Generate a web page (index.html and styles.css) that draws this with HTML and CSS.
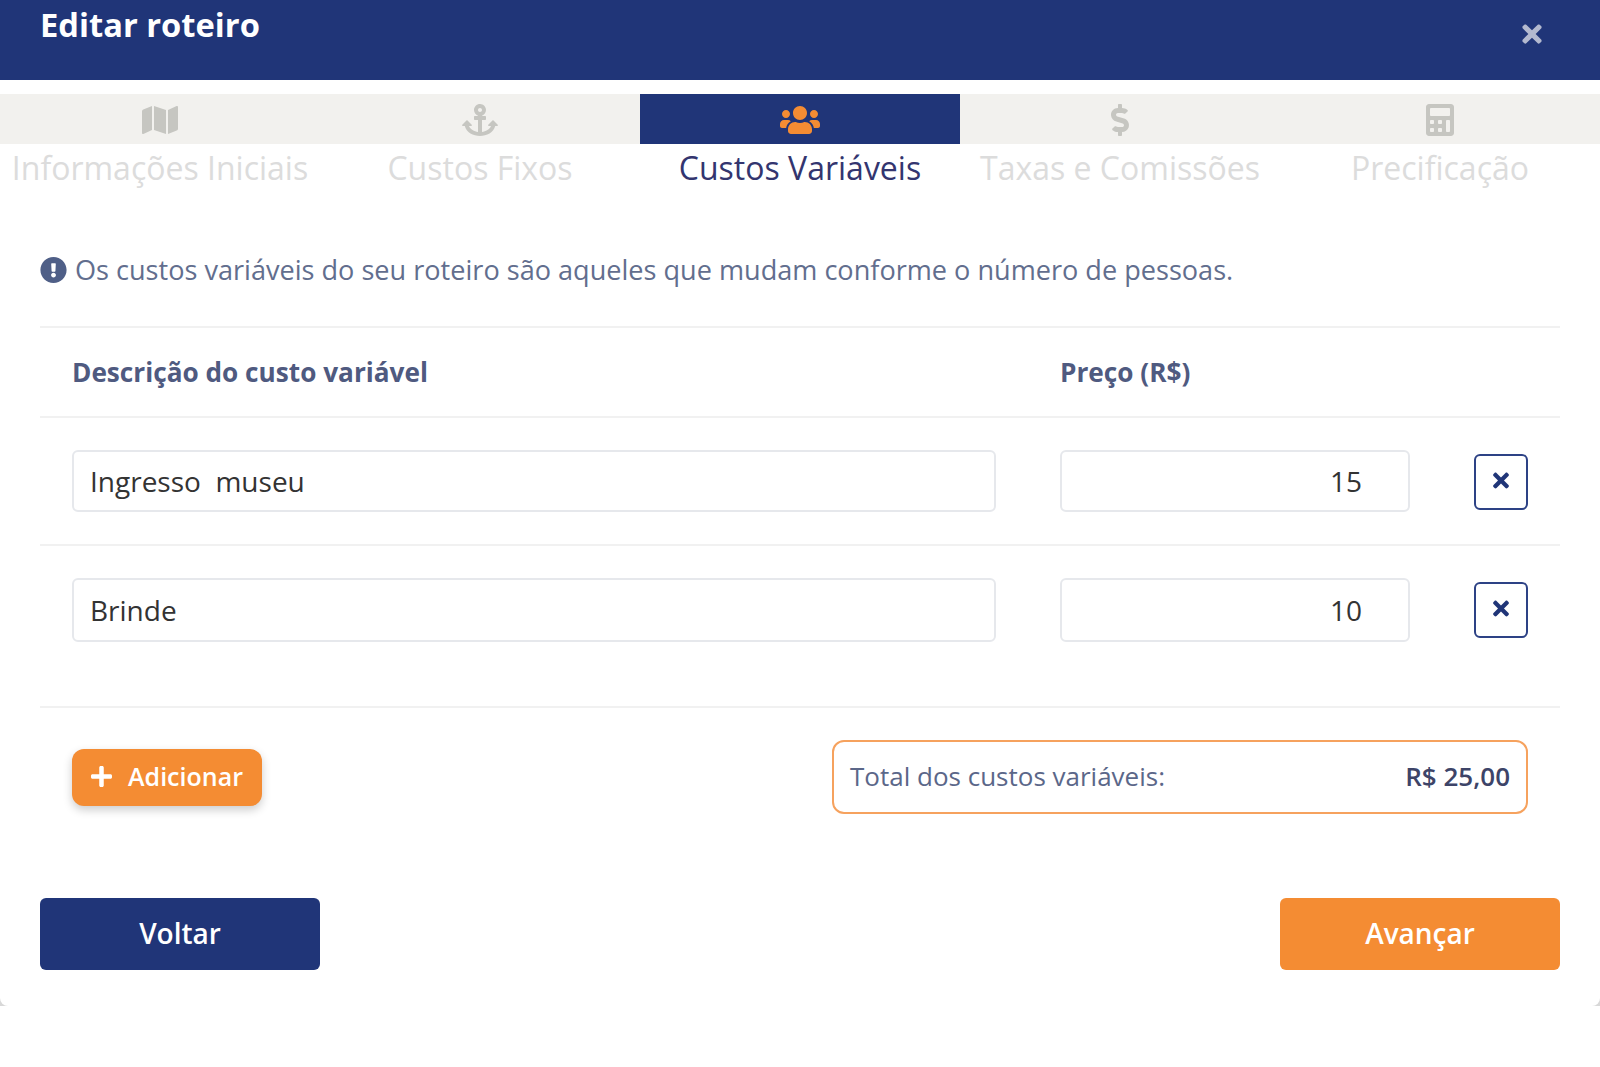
FILE: index.html
```html
<!DOCTYPE html>
<html lang="pt-BR">

<head>
  <meta charset="UTF-8">
  <title>Editar roteiro</title>
  <link rel="stylesheet" href="styles.css">
</head>

<body>
  <div class="page">
  <div class="modal">
    <header class="modal-head">
      <h2>Editar roteiro</h2>
      <svg class="close" viewBox="0 0 352 512"><path d="M242.72 256l100.07-100.07c12.28-12.28 12.28-32.19 0-44.48l-22.24-22.24c-12.28-12.28-32.19-12.28-44.48 0L176 189.28 75.93 89.21c-12.28-12.28-32.19-12.28-44.48 0L9.21 111.45c-12.28 12.28-12.28 32.19 0 44.48L109.28 256 9.21 356.07c-12.28 12.28-12.28 32.19 0 44.48l22.24 22.24c12.28 12.28 32.2 12.28 44.48 0L176 322.72l100.07 100.07c12.28 12.28 32.2 12.28 44.48 0l22.24-22.24c12.28-12.28 12.28-32.19 0-44.48L242.72 256z"/></svg>
    </header>

    <nav class="tabs">
      <div class="tab">
        <div class="tab-icon"><svg viewBox="0 0 576 512"><path d="M0 117.66v346.32c0 11.32 11.43 19.06 21.94 14.86L160 416V32L20.12 87.95A32.006 32.006 0 0 0 0 117.66zM192 416l192 64V96L192 32v384zM554.06 33.16L416 96v384l139.88-55.95A31.996 31.996 0 0 0 576 394.34V48.02c0-11.32-11.43-19.06-21.94-14.86z"/></svg></div>
        <span>Informações Iniciais</span>
      </div>
      <div class="tab">
        <div class="tab-icon"><svg viewBox="0 0 576 512"><path d="M12.971 352h32.394C67.172 454.735 181.944 512 288 512c106.229 0 220.853-57.38 242.635-160h32.394c10.691 0 16.045-12.926 8.485-20.485l-67.029-67.029c-4.686-4.686-12.284-4.686-16.971 0l-67.029 67.029c-7.56 7.56-2.206 20.485 8.485 20.485h35.146c-20.29 54.317-84.963 86.588-144.117 94.015V256h52c6.627 0 12-5.373 12-12v-40c0-6.627-5.373-12-12-12h-52v-5.47c37.281-13.178 63.995-48.725 64-90.518C384.005 43.772 341.605.738 289.37.01 235.723-.739 192 42.525 192 96c0 41.798 26.716 77.35 64 90.53V192h-52c-6.627 0-12 5.373-12 12v40c0 6.627 5.373 12 12 12h52v190.015c-58.936-7.399-123.82-39.679-144.117-94.015h35.146c10.691 0 16.045-12.926 8.485-20.485l-67.029-67.029c-4.686-4.686-12.284-4.686-16.971 0L4.485 331.515C-3.074 339.074 2.28 352 12.971 352zM288 64c17.645 0 32 14.355 32 32s-14.355 32-32 32-32-14.355-32-32 14.355-32 32-32z"/></svg></div>
        <span>Custos Fixos</span>
      </div>
      <div class="tab active">
        <div class="tab-icon"><svg viewBox="0 0 640 512"><path d="M96 224c35.3 0 64-28.7 64-64s-28.7-64-64-64-64 28.7-64 64 28.7 64 64 64zm448 0c35.3 0 64-28.7 64-64s-28.7-64-64-64-64 28.7-64 64 28.7 64 64 64zm32 32h-64c-17.6 0-33.5 7.1-45.1 18.6 40.3 22.1 68.9 62 75.1 109.4h66c17.7 0 32-14.3 32-32v-32c0-35.3-28.7-64-64-64zm-256 0c61.9 0 112-50.1 112-112S381.9 32 320 32 208 82.1 208 144s50.1 112 112 112zm76.8 32h-8.3c-20.8 10-43.9 16-68.5 16s-47.6-6-68.5-16h-8.3C179.6 288 128 339.6 128 403.2V432c0 26.5 21.5 48 48 48h288c26.5 0 48-21.5 48-48v-28.8c0-63.6-51.6-115.2-115.2-115.2zm-223.7-13.4C161.5 263.1 145.6 256 128 256H64c-35.3 0-64 28.7-64 64v32c0 17.7 14.3 32 32 32h65.9c6.3-47.4 34.9-87.3 75.2-109.4z"/></svg></div>
        <span>Custos Variáveis</span>
      </div>
      <div class="tab">
        <div class="tab-icon"><svg viewBox="0 0 288 512"><path d="M209.2 233.4l-108-31.6C88.7 198.2 80 186.5 80 173.5c0-16.3 13.2-29.5 29.5-29.5h66.3c12.2 0 24.2 3.7 34.2 10.5 6.1 4.1 14.3 3.1 19.5-2l34.8-34c7.1-6.9 6.1-18.4-1.8-24.5C238 74.8 207.4 64.1 176 64V16c0-8.8-7.2-16-16-16h-32c-8.8 0-16 7.2-16 16v48h-2.5C45.8 64-5.4 118.7.5 183.6c4.2 46.1 39.4 83.6 83.8 96.6l102.5 30c12.5 3.7 21.2 15.3 21.2 28.3 0 16.3-13.2 29.5-29.5 29.5h-66.3C100 368 88 364.3 78 357.5c-6.1-4.1-14.3-3.1-19.5 2l-34.8 34c-7.1 6.9-6.1 18.4 1.8 24.5 24.5 19.2 55.1 29.9 86.5 30v48c0 8.8 7.2 16 16 16h32c8.8 0 16-7.2 16-16v-48.2c46.6-.9 90.3-28.6 105.7-72.7 21.5-61.6-14.6-124.8-72.5-141.7z"/></svg></div>
        <span>Taxas e Comissões</span>
      </div>
      <div class="tab">
        <div class="tab-icon"><svg viewBox="0 0 448 512"><path d="M400 0H48C22.4 0 0 22.4 0 48v416c0 25.6 22.4 48 48 48h352c25.6 0 48-22.4 48-48V48c0-25.6-22.4-48-48-48zM128 435c0 6.4-6.4 12.8-12.8 12.8H76.8c-6.4 0-12.8-6.4-12.8-12.8v-38.4c0-6.4 6.4-12.8 12.8-12.8h38.4c6.4 0 12.8 6.4 12.8 12.8V435zm0-128c0 6.4-6.4 12.8-12.8 12.8H76.8c-6.4 0-12.8-6.4-12.8-12.8v-38.4c0-6.4 6.4-12.8 12.8-12.8h38.4c6.4 0 12.8 6.4 12.8 12.8V307zm128 128c0 6.4-6.4 12.8-12.8 12.8h-38.4c-6.4 0-12.8-6.4-12.8-12.8v-38.4c0-6.4 6.4-12.8 12.8-12.8h38.4c6.4 0 12.8 6.4 12.8 12.8V435zm0-128c0 6.4-6.4 12.8-12.8 12.8h-38.4c-6.4 0-12.8-6.4-12.8-12.8v-38.4c0-6.4 6.4-12.8 12.8-12.8h38.4c6.4 0 12.8 6.4 12.8 12.8V307zm128 128c0 6.4-6.4 12.8-12.8 12.8h-38.4c-6.4 0-12.8-6.4-12.8-12.8V268.8c0-6.4 6.4-12.8 12.8-12.8h38.4c6.4 0 12.8 6.4 12.8 12.8V435zm0-256c0 6.4-6.4 12.8-12.8 12.8H76.8c-6.4 0-12.8-6.4-12.8-12.8V76.8C64 70.4 70.4 64 76.8 64h294.4c6.4 0 12.8 6.4 12.8 12.8V179.2z"/></svg></div>
        <span>Precificação</span>
      </div>
    </nav>

    <section class="content">
      <p class="hint">
        <svg viewBox="0 0 512 512"><path d="M504 256c0 136.997-111.043 248-248 248S8 392.997 8 256C8 119.083 119.043 8 256 8s248 111.083 248 248zm-248 50c-25.405 0-46 20.595-46 46s20.595 46 46 46 46-20.595 46-46-20.595-46-46-46zm-43.673-165.346l7.418 136c.347 6.364 5.609 11.346 11.982 11.346h48.546c6.373 0 11.635-4.982 11.982-11.346l7.418-136c.375-6.874-5.098-12.654-11.982-12.654h-63.383c-6.884 0-12.356 5.78-11.981 12.654z"/></svg>
        Os custos variáveis do seu roteiro são aqueles que mudam conforme o número de pessoas.
      </p>

      <div class="row row-head">
        <div class="col-desc">Descrição do custo variável</div>
        <div class="col-price">Preço (R$)</div>
      </div>

      <div class="row row-item">
        <div class="col-desc"><input class="field" type="text" value="Ingresso  museu"></div>
        <div class="col-price"><input class="field num" type="text" value="15"></div>
        <button class="del"><svg viewBox="0 0 352 512"><path d="M242.72 256l100.07-100.07c12.28-12.28 12.28-32.19 0-44.48l-22.24-22.24c-12.28-12.28-32.19-12.28-44.48 0L176 189.28 75.93 89.21c-12.28-12.28-32.19-12.28-44.48 0L9.21 111.45c-12.28 12.28-12.28 32.19 0 44.48L109.28 256 9.21 356.07c-12.28 12.28-12.28 32.19 0 44.48l22.24 22.24c12.28 12.28 32.2 12.28 44.48 0L176 322.72l100.07 100.07c12.28 12.28 32.2 12.28 44.48 0l22.24-22.24c12.28-12.28 12.28-32.19 0-44.48L242.72 256z"/></svg></button>
      </div>

      <div class="row row-item row-last">
        <div class="col-desc"><input class="field" type="text" value="Brinde"></div>
        <div class="col-price"><input class="field num" type="text" value="10"></div>
        <button class="del"><svg viewBox="0 0 352 512"><path d="M242.72 256l100.07-100.07c12.28-12.28 12.28-32.19 0-44.48l-22.24-22.24c-12.28-12.28-32.19-12.28-44.48 0L176 189.28 75.93 89.21c-12.28-12.28-32.19-12.28-44.48 0L9.21 111.45c-12.28 12.28-12.28 32.19 0 44.48L109.28 256 9.21 356.07c-12.28 12.28-12.28 32.19 0 44.48l22.24 22.24c12.28 12.28 32.2 12.28 44.48 0L176 322.72l100.07 100.07c12.28 12.28 32.2 12.28 44.48 0l22.24-22.24c12.28-12.28 12.28-32.19 0-44.48L242.72 256z"/></svg></button>
      </div>

      <div class="summary">
        <button class="add">
          <svg viewBox="0 0 448 512"><path d="M416 208H272V64c0-17.67-14.33-32-32-32h-32c-17.67 0-32 14.33-32 32v144H32c-17.67 0-32 14.33-32 32v32c0 17.67 14.33 32 32 32h144v144c0 17.67 14.33 32 32 32h32c17.67 0 32-14.33 32-32V304h144c17.67 0 32-14.33 32-32v-32c0-17.67-14.33-32-32-32z"/></svg>
          Adicionar
        </button>
        <div class="total">
          <span>Total dos custos variáveis:</span>
          <b>R$ 25,00</b>
        </div>
      </div>

      <div class="actions">
        <button class="btn btn-back">Voltar</button>
        <button class="btn btn-next">Avançar</button>
      </div>
    </section>
  </div>
  </div>
</body>

</html>
```

FILE: styles.css
```css
html,
body {
  margin: 0;
  background: #fff;
}

body {
  font-family: "Open Sans", sans-serif;
  height: 1067px;
  overflow: hidden;
}

/* backdrop only shows through the rounded bottom corners */
.page {
  height: 1006px;
  background: #d8d8d8;
}

.modal {
  height: 100%;
  background: #fff;
  border-radius: 0 0 8px 8px;
}

.modal-head {
  height: 80px;
  background: #203578;
  display: flex;
  justify-content: space-between;
  padding: 0 58px 0 40px;
  box-sizing: border-box;
}

.modal-head h2 {
  margin: 4px 0 0;
  color: #fff;
  font-size: 32.7px;
  line-height: 42px;
  font-weight: 700;
}

.close {
  width: 20px;
  height: 28px;
  margin-top: 20px;
  fill: #b3b9cf;
}

.tabs {
  display: flex;
  margin-top: 14px;
}

.tab {
  flex: 1;
  text-align: center;
  font-size: 32px;
  line-height: 48px;
  color: #dcdcdc;
}

.tab-icon {
  height: 50px;
  box-sizing: border-box;
  padding-top: 2px;
  background: #f2f1ee;
  display: flex;
  align-items: center;
  justify-content: center;
}

.tab-icon svg {
  height: 32px;
  width: 40px;
  fill: #c6c6c1;
}

.tab.active {
  color: #33356f;
}

.tab.active .tab-icon {
  background: #203578;
}

.tab.active .tab-icon svg {
  fill: #f48c33;
}

.content {
  padding: 0 40px;
}

.hint {
  margin: 60px 0 0;
  height: 74px;
  font-size: 27.1px;
  line-height: 36px;
  color: #626e8e;
  display: flex;
  gap: 8px;
  border-bottom: 2px solid #f1f1f1;
}

.hint svg {
  width: 27px;
  height: 36px;
  fill: #4f5f87;
  flex: none;
}

.row {
  display: flex;
  padding: 0 32px;
  border-bottom: 2px solid #f1f1f1;
}

.col-desc {
  width: 924px;
  margin-right: 64px;
}

.col-price {
  width: 350px;
  margin-right: 64px;
}

.row-head {
  height: 88px;
  align-items: center;
  font-size: 26.2px;
  font-weight: 700;
  color: #4f5a80;
}

.row-item {
  height: 126px;
  align-items: center;
}

.row-last {
  height: 162px;
  padding-bottom: 32px;
  box-sizing: border-box;
}

.row-last .field {
  height: 64px;
}

.field {
  width: 100%;
  height: 62px;
  box-sizing: border-box;
  border: 2px solid #e6e8ec;
  border-radius: 6px;
  padding: 0 16px;
  font-family: inherit;
  font-size: 28px;
  color: #333;
  background: #fff;
}

.num {
  text-align: right;
  padding-right: 46px;
}

.del {
  width: 54px;
  height: 56px;
  flex: none;
  margin-top: 2px;
  padding: 0 0 3px;
  background: #fff;
  border: 2px solid #2d4285;
  border-radius: 6px;
  display: flex;
  align-items: center;
  justify-content: center;
}

.row-last .del {
  margin-top: 0;
}

.del svg {
  width: 16px;
  height: 23px;
  fill: #203578;
}

.summary {
  display: flex;
  align-items: center;
  justify-content: space-between;
  padding: 32px 32px 0;
}

.add {
  width: 190px;
  height: 57px;
  border: 0;
  border-radius: 12px;
  background: #f48c33;
  box-shadow: 0 4px 10px rgba(0, 0, 0, .2);
  color: #fff;
  font-family: inherit;
  font-size: 25px;
  font-weight: 600;
  display: flex;
  align-items: center;
  justify-content: center;
  gap: 16px;
  padding: 0 0 2px;
}

.add svg {
  width: 21px;
  height: 25px;
  fill: #fff;
}

.total {
  width: 696px;
  height: 74px;
  box-sizing: border-box;
  border: 2px solid #f6a25e;
  border-radius: 12px;
  padding: 0 16px 2px;
  display: flex;
  align-items: center;
  justify-content: space-between;
  font-size: 26px;
  color: #5b6789;
}

.total b {
  font-weight: 600;
  color: #3d4468;
}

.actions {
  display: flex;
  justify-content: space-between;
  margin-top: 84px;
}

.btn {
  width: 280px;
  height: 72px;
  border: 0;
  border-radius: 6px;
  padding: 0 0 2px;
  color: #fff;
  font-family: inherit;
  font-size: 28px;
  font-weight: 600;
}

.btn-back {
  background: #203578;
}

.btn-next {
  background: #f48c33;
}
```
